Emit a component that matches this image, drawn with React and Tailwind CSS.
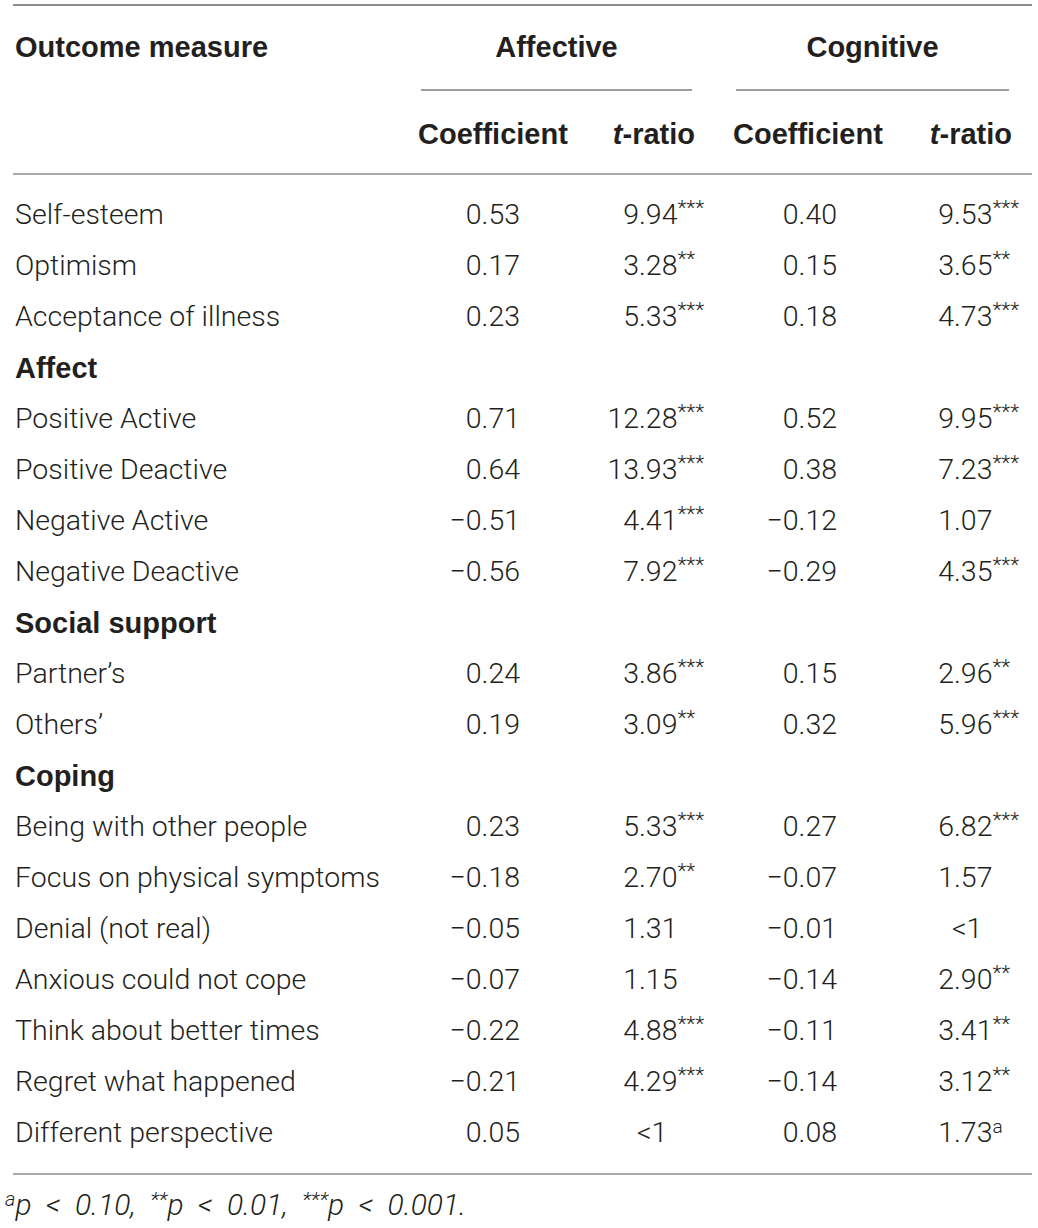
const rows = [
  { label: 'Self-esteem', c1: '0.53', t1: ['9.94', '***'], c2: '0.40', t2: ['9.53', '***'] },
  { label: 'Optimism', c1: '0.17', t1: ['3.28', '**'], c2: '0.15', t2: ['3.65', '**'] },
  { label: 'Acceptance of illness', c1: '0.23', t1: ['5.33', '***'], c2: '0.18', t2: ['4.73', '***'] },
  { label: 'Affect', section: true },
  { label: 'Positive Active', c1: '0.71', t1: ['12.28', '***'], c2: '0.52', t2: ['9.95', '***'] },
  { label: 'Positive Deactive', c1: '0.64', t1: ['13.93', '***'], c2: '0.38', t2: ['7.23', '***'] },
  { label: 'Negative Active', c1: '\u22120.51', t1: ['4.41', '***'], c2: '\u22120.12', t2: ['1.07', ''] },
  { label: 'Negative Deactive', c1: '\u22120.56', t1: ['7.92', '***'], c2: '\u22120.29', t2: ['4.35', '***'] },
  { label: 'Social support', section: true },
  { label: 'Partner\u2019s', c1: '0.24', t1: ['3.86', '***'], c2: '0.15', t2: ['2.96', '**'] },
  { label: 'Others\u2019', c1: '0.19', t1: ['3.09', '**'], c2: '0.32', t2: ['5.96', '***'] },
  { label: 'Coping', section: true },
  { label: 'Being with other people', c1: '0.23', t1: ['5.33', '***'], c2: '0.27', t2: ['6.82', '***'] },
  { label: 'Focus on physical symptoms', c1: '\u22120.18', t1: ['2.70', '**'], c2: '\u22120.07', t2: ['1.57', ''] },
  { label: 'Denial (not real)', c1: '\u22120.05', t1: ['1.31', ''], c2: '\u22120.01', t2: ['<1', ''] },
  { label: 'Anxious could not cope', c1: '\u22120.07', t1: ['1.15', ''], c2: '\u22120.14', t2: ['2.90', '**'] },
  { label: 'Think about better times', c1: '\u22120.22', t1: ['4.88', '***'], c2: '\u22120.11', t2: ['3.41', '**'] },
  { label: 'Regret what happened', c1: '\u22120.21', t1: ['4.29', '***'], c2: '\u22120.14', t2: ['3.12', '**'] },
  { label: 'Different perspective', c1: '0.05', t1: ['<1', ''], c2: '0.08', t2: ['1.73', 'a'] },
];

function TValue({ value, intWidth }) {
  const [num, sup] = value;
  if (num === '<1') {
    return (
      <div className="flex">
        <span className={intWidth}></span>
        <span className="-ml-[2px]">&lt;1</span>
      </div>
    );
  }
  const [whole, frac] = num.split('.');
  return (
    <div className="flex items-start">
      <span className={`${intWidth} text-right`}>{whole}</span>
      <span>.{frac}</span>
      {sup && (
        <span className={sup === 'a' ? 'text-[19px] -translate-y-[2px]' : 'text-[21px] -translate-y-[3px]'}>
          {sup}
        </span>
      )}
    </div>
  );
}

function GroupHeader({ title, width }) {
  return (
    <div className={`${width} flex flex-col`}>
      <div className="h-[83px] flex items-center justify-center font-bold">{title}</div>
      <div className="h-[2px] mx-[3px] bg-[#9d9d9d]" />
      <div className="h-[82px] flex items-center justify-between pt-[4px] font-bold">
        <span>Coefficient</span>
        <span><span className="italic">t</span>-ratio</span>
      </div>
    </div>
  );
}

export default function App() {
  return (
    <div className="w-[1038px] h-[1228px] bg-white text-[#231f20] font-['Roboto','Liberation_Sans',sans-serif] text-[28.5px] leading-none">
      <div className="ml-[13px] w-[1019px]">
        <div className="h-[4px]" />
        <div className="h-[2px] bg-[#8c8c8c]" />

        {/* header */}
        <div className="flex font-['Liberation_Sans',sans-serif] text-[29px]">
          <div className="w-[405px] h-[83px] flex items-center pl-[2px] font-bold">Outcome measure</div>
          <GroupHeader title="Affective" width="w-[277px]" />
          <div className="w-[38px]" />
          <GroupHeader title="Cognitive" width="w-[279px]" />
        </div>
        <div className="h-[2px] bg-[#a9a9a9]" />

        {/* body */}
        <div className="pt-[15px] pb-[14px] font-light">
          {rows.map((row, i) =>
            row.section ? (
              <div key={i} className="h-[51px] flex items-center pl-[2px] font-bold font-['Liberation_Sans',sans-serif] text-[29px]">
                {row.label}
              </div>
            ) : (
              <div key={i} className="h-[51px] grid grid-cols-[387px_120px_218px_99px_195px] items-center">
                <div className="pl-[2px]">{row.label}</div>
                <div className="text-right">{row.c1}</div>
                <TValue value={row.t1} intWidth="w-[119px]" />
                <div className="text-right">{row.c2}</div>
                <TValue value={row.t2} intWidth="w-[117px]" />
              </div>
            )
          )}
        </div>
        <div className="h-[2px] bg-[#a9a9a9]" />
      </div>

      {/* footnote */}
      <div className="pt-[15px] pl-[5px] italic font-light text-[30px] [word-spacing:7px]">
        <span className="text-[20px] relative -top-[9px]">a</span>
        <span>p &lt; 0.10, </span>
        <span className="text-[21px] relative -top-[8px]">**</span>
        <span>p &lt; 0.01, </span>
        <span className="text-[21px] relative -top-[8px]">***</span>
        <span>p &lt; 0.001.</span>
      </div>
    </div>
  );
}
